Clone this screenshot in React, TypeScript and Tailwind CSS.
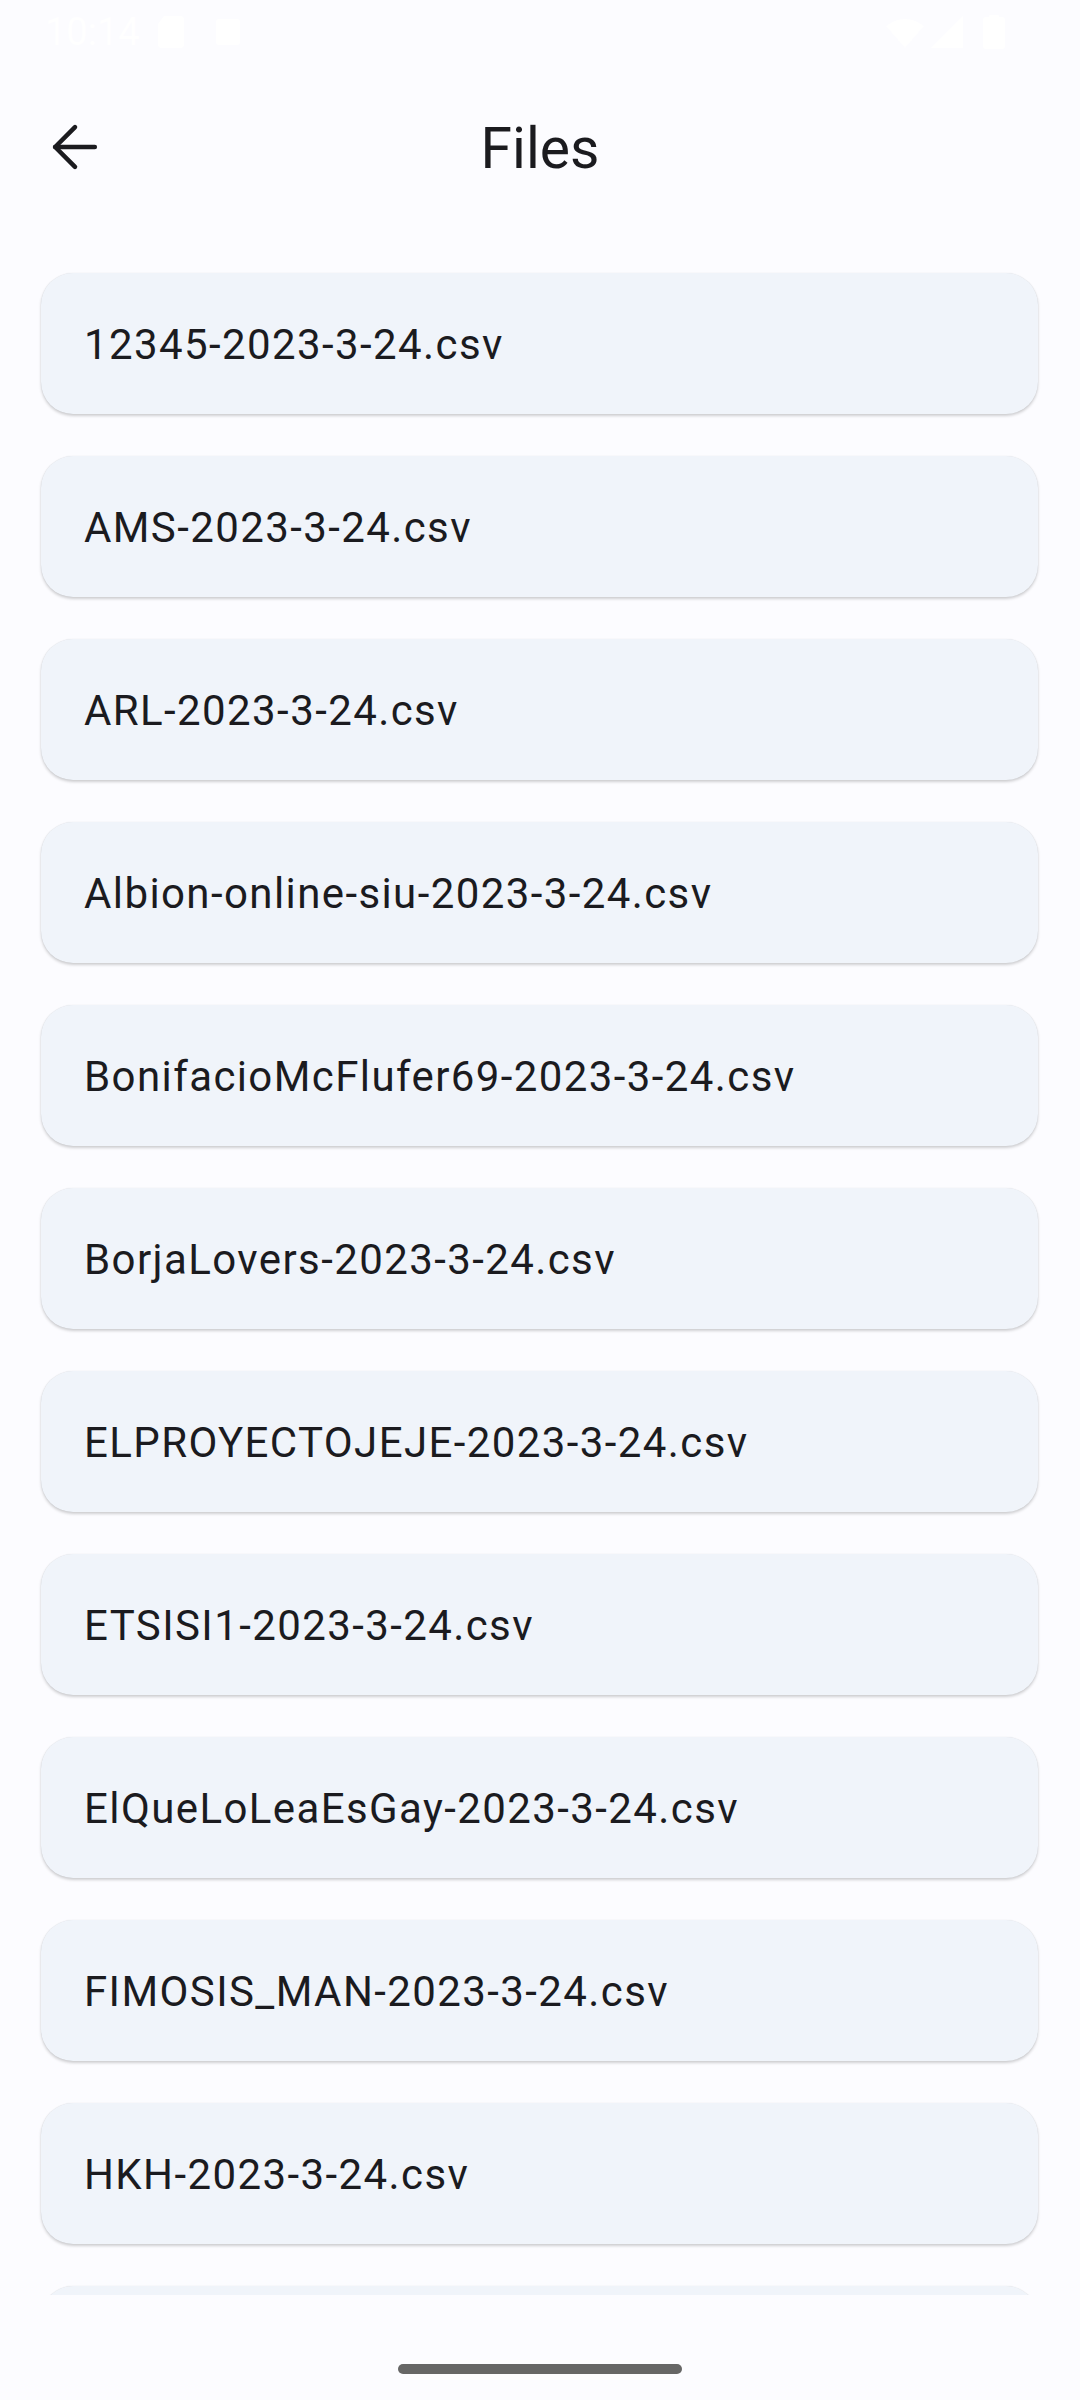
import React from "react";

const files = [
  "12345-2023-3-24.csv",
  "AMS-2023-3-24.csv",
  "ARL-2023-3-24.csv",
  "Albion-online-siu-2023-3-24.csv",
  "BonifacioMcFlufer69-2023-3-24.csv",
  "BorjaLovers-2023-3-24.csv",
  "ELPROYECTOJEJE-2023-3-24.csv",
  "ETSISI1-2023-3-24.csv",
  "ElQueLoLeaEsGay-2023-3-24.csv",
  "FIMOSIS_MAN-2023-3-24.csv",
  "HKH-2023-3-24.csv",
  "",
];

function StatusBar() {
  return (
    <div className="h-[63px] flex items-center justify-between px-[45px] text-white">
      <div className="flex items-center gap-[16px]">
        <span className="text-[38px] leading-none" style={{ fontFamily: "Roboto, sans-serif" }}>10:14</span>
        <svg width="26" height="32" viewBox="0 0 26 32" className="ml-[2px]">
          <path d="M6 0h16a4 4 0 0 1 4 4v24a4 4 0 0 1-4 4H4a4 4 0 0 1-4-4V8z" fill="#ffffff" />
        </svg>
        <svg width="24" height="26" viewBox="0 0 24 26" className="ml-[16px]">
          <rect x="0" y="0" width="24" height="26" rx="3" fill="#ffffff" />
        </svg>
      </div>
      <div className="flex items-center gap-[6px] pr-[30px]">
        <svg width="40" height="32" viewBox="0 0 40 32">
          <path d="M1 10 Q20 -4 39 10 L20 32 Z" fill="#ffffff" />
        </svg>
        <svg width="32" height="32" viewBox="0 0 32 32">
          <path d="M32 0 V32 H0 Z" fill="#ffffff" />
        </svg>
        <svg width="22" height="34" viewBox="0 0 22 34" className="ml-[14px]">
          <rect x="0" y="2" width="22" height="32" rx="3" fill="#ffffff" />
          <rect x="6" y="0" width="10" height="4" rx="1" fill="#ffffff" />
        </svg>
      </div>
    </div>
  );
}

export default function App() {
  return (
    <div
      className="w-[1080px] h-[2400px] bg-[#fcfcff] flex flex-col overflow-hidden"
      style={{ fontFamily: "Roboto, 'Noto Sans', sans-serif" }}
    >
      <StatusBar />
      <div className="relative h-[170px] flex items-center justify-center shrink-0">
        <svg
          className="absolute left-[41px] top-[50px]"
          width="68"
          height="68"
          viewBox="0 0 24 24"
          fill="none"
          stroke="#1b1b1f"
          strokeWidth="1.6"
          strokeLinecap="round"
          strokeLinejoin="round"
        >
          <path d="m12 19-7-7 7-7" />
          <path d="M19 12H5" />
        </svg>
        <span className="text-[57px] leading-none text-[#1b1b1f]">Files</span>
      </div>
      <div className="h-[2062px] shrink-0 overflow-hidden pt-[40px] flex flex-col gap-[42px]">
        {files.map((f, i) => (
          <div
            key={i}
            className="mx-[41px] w-[997px] h-[141px] shrink-0 rounded-[32px] bg-[#f0f4fa] shadow-[0_2px_3px_rgba(0,0,0,0.18),0_0_1px_rgba(0,0,0,0.12)] flex items-center pl-[43px] pt-[3px]"
          >
            <span className="text-[42px] leading-none text-[#1b1b1f] tracking-[1.4px]">{f}</span>
          </div>
        ))}
      </div>
      <div className="flex-1 flex items-start justify-center pt-[69px]">
        <div className="w-[284px] h-[10px] rounded-full bg-[#666666]" />
      </div>
    </div>
  );
}
